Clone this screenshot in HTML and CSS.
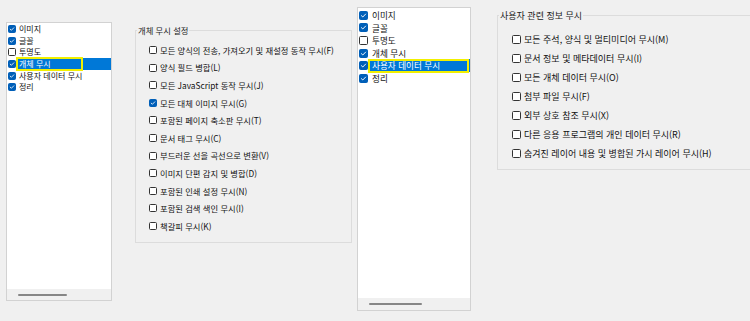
FILE: index.html
```html
<!DOCTYPE html>
<html lang="ko">
<head>
<meta charset="utf-8">
<title>개체 무시 설정</title>
<link rel="stylesheet" href="styles.css">
</head>
<body>
<div class="page">
  <section class="half half-a">
    <div class="list">
      <ul class="items">
        <li class="item"><span class="cb on"><svg viewBox="0 0 8 8"><path d="M1.6 4.2 L3.2 5.7 L6.4 2.4" /></svg></span><span class="lbl">이미지</span></li>
        <li class="item"><span class="cb on"><svg viewBox="0 0 8 8"><path d="M1.6 4.2 L3.2 5.7 L6.4 2.4" /></svg></span><span class="lbl">글꼴</span></li>
        <li class="item"><span class="cb"></span><span class="lbl">투명도</span></li>
        <li class="item sel"><span class="cb on"><svg viewBox="0 0 8 8"><path d="M1.6 4.2 L3.2 5.7 L6.4 2.4" /></svg></span><span class="lbl">개체 무시<span class="mark"></span></span></li>
        <li class="item"><span class="cb on"><svg viewBox="0 0 8 8"><path d="M1.6 4.2 L3.2 5.7 L6.4 2.4" /></svg></span><span class="lbl">사용자 데이터 무시</span></li>
        <li class="item"><span class="cb on"><svg viewBox="0 0 8 8"><path d="M1.6 4.2 L3.2 5.7 L6.4 2.4" /></svg></span><span class="lbl">정리</span></li>
      </ul>
      <div class="hscroll"><span class="thumb"></span></div>
    </div>
    <fieldset class="group">
      <legend>개체 무시 설정</legend>
      <ul class="opts">
        <li class="opt"><span class="cb"></span>모든 양식의 전송, 가져오기 및 재설정 동작 무시(F)</li>
        <li class="opt"><span class="cb"></span>양식 필드 병합(L)</li>
        <li class="opt"><span class="cb"></span>모든 JavaScript 동작 무시(J)</li>
        <li class="opt"><span class="cb on"><svg viewBox="0 0 8 8"><path d="M1.6 4.2 L3.2 5.7 L6.4 2.4" /></svg></span>모든 대체 이미지 무시(G)</li>
        <li class="opt"><span class="cb"></span>포함된 페이지 축소판 무시(T)</li>
        <li class="opt"><span class="cb"></span>문서 태그 무시(C)</li>
        <li class="opt"><span class="cb"></span>부드러운 선을 곡선으로 변환(V)</li>
        <li class="opt"><span class="cb"></span>이미지 단편 감지 및 병합(D)</li>
        <li class="opt"><span class="cb"></span>포함된 인쇄 설정 무시(N)</li>
        <li class="opt"><span class="cb"></span>포함된 검색 색인 무시(I)</li>
        <li class="opt"><span class="cb"></span>책갈피 무시(K)</li>
      </ul>
    </fieldset>
  </section>

  <section class="half half-b">
    <div class="list">
      <ul class="items">
        <li class="item"><span class="cb on"><svg viewBox="0 0 8 8"><path d="M1.6 4.2 L3.2 5.7 L6.4 2.4" /></svg></span><span class="lbl">이미지</span></li>
        <li class="item"><span class="cb on"><svg viewBox="0 0 8 8"><path d="M1.6 4.2 L3.2 5.7 L6.4 2.4" /></svg></span><span class="lbl">글꼴</span></li>
        <li class="item"><span class="cb"></span><span class="lbl">투명도</span></li>
        <li class="item"><span class="cb on"><svg viewBox="0 0 8 8"><path d="M1.6 4.2 L3.2 5.7 L6.4 2.4" /></svg></span><span class="lbl">개체 무시</span></li>
        <li class="item sel"><span class="cb on"><svg viewBox="0 0 8 8"><path d="M1.6 4.2 L3.2 5.7 L6.4 2.4" /></svg></span><span class="lbl">사용자 데이터 무시<span class="mark"></span></span></li>
        <li class="item"><span class="cb on"><svg viewBox="0 0 8 8"><path d="M1.6 4.2 L3.2 5.7 L6.4 2.4" /></svg></span><span class="lbl">정리</span></li>
      </ul>
      <div class="hscroll"><span class="thumb"></span></div>
    </div>
    <fieldset class="group">
      <legend>사용자 관련 정보 무시</legend>
      <ul class="opts">
        <li class="opt"><span class="cb"></span>모든 주석, 양식 및 멀티미디어 무시(M)</li>
        <li class="opt"><span class="cb"></span>문서 정보 및 메타데이터 무시(I)</li>
        <li class="opt"><span class="cb"></span>모든 개체 데이터 무시(O)</li>
        <li class="opt"><span class="cb"></span>첨부 파일 무시(F)</li>
        <li class="opt"><span class="cb"></span>외부 상호 참조 무시(X)</li>
        <li class="opt"><span class="cb"></span>다른 응용 프로그램의 개인 데이터 무시(R)</li>
        <li class="opt"><span class="cb"></span>숨겨진 레이어 내용 및 병합된 가시 레이어 무시(H)</li>
      </ul>
    </fieldset>
  </section>
</div>
</body>
</html>
```

FILE: styles.css
```css
* { box-sizing: border-box; }
html, body {
  margin: 0;
  padding: 0;
  background: #f0f0f0;
  overflow: hidden;
}
body {
  width: 750px;
  height: 321px;
  font-family: "Noto Sans CJK KR", "Noto Sans", sans-serif;
  color: #111;
}
ul { list-style: none; margin: 0; padding: 0; }

.page {
  display: flex;
  align-items: flex-start;
  width: 750px;
  height: 321px;
  overflow: hidden;
}
.half { display: flex; align-items: flex-start; flex: none; }
.half-a { width: 356px; padding: 22px 0 0 6px; font-size: 8.3px; }
.half-b { width: 394px; padding: 7px 0 0 1px; font-size: 9px; }

/* list box */
.list {
  flex: none;
  display: flex;
  flex-direction: column;
  background: #fff;
  border: 1px solid #d2d2d2;
}
.half-a .list { width: 106px; height: 279px; font-size: 8px; }
.half-b .list { width: 114px; height: 304px; font-size: 8.6px; }
.items { flex: 1; padding-top: 0.5px; }
.half-b .items { padding-top: 1px; }
.item {
  display: flex;
  align-items: center;
  padding-left: 1px;
  white-space: nowrap;
}
.half-a .item { height: 11.6px; }
.half-b .item { height: 12.6px; }
.lbl { padding-left: 3px; line-height: 1; }
.half-b .lbl { padding-left: 4px; }
.item.sel .lbl {
  position: relative;
  flex: 1;
  background: #0078d7;
  color: #fff;
  align-self: stretch;
  display: flex;
  align-items: center;
}
.mark {
  position: absolute;
  border: 2px solid #f2f000;
  pointer-events: none;
}
.half-a .mark { left: 0; top: -1.2px; width: 67px; height: 14px; }
.half-b .mark { left: 0; top: -0.7px; right: 1px; height: 14px; }

.hscroll {
  display: flex;
  align-items: center;
  background: #f0f0f0;
  padding-left: 11px;
}
.half-a .hscroll { height: 11px; }
.half-b .hscroll { height: 12px; }
.thumb { height: 2px; background: #868686; border-radius: 1px; }
.half-a .thumb { width: 49px; }
.half-b .thumb { width: 53px; }

/* checkbox */
.cb {
  flex: none;
  display: inline-flex;
  align-items: center;
  justify-content: center;
  width: 8px;
  height: 8px;
  border: 1px solid #333;
  border-radius: 1.5px;
  background: #fff;
}
.half-b .cb { width: 9px; height: 9px; }
.cb.on { background: #005fb8; border-color: #005fb8; }
.cb svg { width: 100%; height: 100%; display: block; }
.cb svg path { fill: none; stroke: #fff; stroke-width: 1.1; stroke-linecap: round; stroke-linejoin: round; }

/* group box */
.group {
  flex: none;
  margin: 0;
  padding: 0;
  border: 1px solid #dcdcdc;
  min-width: 0;
}
.group legend {
  margin-left: 1px;
  padding: 0 1px;
  line-height: 12px;
  color: #222;
}
.half-a .group { margin: 2px 0 0 23px; width: 217px; height: 219px; }
.half-b .group { margin: 2px 0 0 26px; width: 300px; height: 161px; }
.half-b .group legend { line-height: 13px; }

.opts { padding-left: 13px; }
.half-a .opts { padding-top: 5.2px; }
.half-b .opts { padding-top: 7.5px; padding-left: 14px; }
.opt {
  display: flex;
  align-items: center;
  gap: 3px;
  white-space: nowrap;
  line-height: 1;
}
.half-a .opt { height: 17.6px; }
.half-b .opt { height: 19px; }
```
